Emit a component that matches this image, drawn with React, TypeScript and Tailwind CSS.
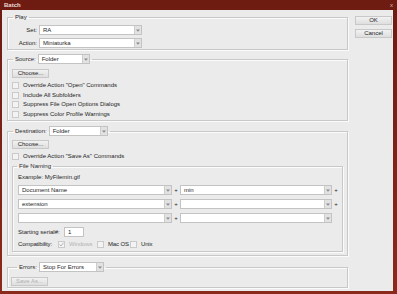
import React from "react";

const font = "font-['Liberation_Sans',Arial,sans-serif]";

function Arrow() {
  return (
    <div className="w-[7px] h-full bg-[#e2e2e2] border-l border-[#cdcdcd] flex items-center justify-center">
      <svg width="4" height="3" viewBox="0 0 4 3">
        <path d="M0 0.5 H4 L2 2.7 Z" fill="#8a8a8a" />
      </svg>
    </div>
  );
}

function Select({ value, w }: { value: string; w: string }) {
  return (
    <div className={`${w} h-[10px] flex items-stretch border border-[#c3c3c3] bg-white`}>
      <div className="flex-1 pl-[3px] leading-[8px] text-[6px] text-[#1e1e1e] truncate">{value}</div>
      <Arrow />
    </div>
  );
}

function Check({ label, checked, disabled }: { label: string; checked?: boolean; disabled?: boolean }) {
  return (
    <div className="flex items-center gap-[4px] whitespace-nowrap">
      <div className="w-[7px] h-[7px] shrink-0 border border-[#cacaca] bg-[#f3f3f3] flex items-center justify-center">
        {checked && (
          <svg width="5" height="5" viewBox="0 0 5 5">
            <path d="M0.5 2.5 L2 4 L4.5 0.8" stroke="#b5b5b5" strokeWidth="1" fill="none" />
          </svg>
        )}
      </div>
      <span className={disabled ? "text-[#b3b3b3]" : "text-[#1e1e1e]"}>{label}</span>
    </div>
  );
}

function Button({ label, w, disabled }: { label: string; w: string; disabled?: boolean }) {
  return (
    <div
      className={`${w} h-[9px] flex items-center justify-center border border-[#c8c8c8] bg-gradient-to-b from-[#f2f2f2] to-[#dedede] leading-[7px] whitespace-nowrap ${
        disabled ? "text-[#b0b0b0]" : "text-[#1e1e1e]"
      }`}
    >
      {label}
    </div>
  );
}

const box = "border border-[#c8c8c8] shadow-[1px_1px_0_#fbfbfb,inset_1px_1px_0_#fbfbfb]";

export default function App() {
  return (
    <div className={`${font} w-[397px] h-[294px] bg-gradient-to-b from-[#6e1b12] to-[#8a2a1d] flex flex-col text-[6px] text-[#1e1e1e] whitespace-nowrap`}>
      {/* title bar */}
      <div className="h-[10px] flex items-center justify-between pl-[4px] pr-[4px]">
        <span className="text-[6px] font-bold text-[#f0dcd8] leading-[8px]">Batch</span>
        <span className="text-[6px] text-[#d8bcb6] leading-[8px]">x</span>
      </div>

      <div className="flex-1 ml-[2px] mr-[4px] mb-[3px] bg-[#ebebeb] flex pl-[5px] pr-[1px]">
        {/* left column */}
        <div className="w-[341px] flex flex-col">
          {/* Play */}
          <fieldset className={`${box} mt-[3px] pb-[1px]`}>
            <legend className="ml-[5px] px-[2px] h-[8px] leading-[8px]">Play</legend>
            <div className="pt-[4px] flex flex-col gap-[3px]">
              <div className="flex items-center">
                <span className="w-[31px] text-right pr-[2px]">Set:</span>
                <Select value="RA" w="w-[103px]" />
              </div>
              <div className="flex items-center">
                <span className="w-[31px] text-right pr-[2px]">Action:</span>
                <Select value="Miniaturka" w="w-[103px]" />
              </div>
            </div>
          </fieldset>

          {/* Source */}
          <fieldset className={`${box} mt-[4px] pb-[1px]`}>
            <legend className="ml-[5px] px-[2px] h-[10px] flex items-center gap-[2px]">
              <span>Source:</span>
              <Select value="Folder" w="w-[52px]" />
            </legend>
            <div className="pt-[5px] pl-[4px] flex flex-col">
              <Button label="Choose..." w="w-[37px]" />
              <div className="mt-[3px] flex flex-col">
                <div className="h-[9.5px] flex items-center"><Check label={'Override Action "Open" Commands'} /></div>
                <div className="h-[9.5px] flex items-center"><Check label="Include All Subfolders" /></div>
                <div className="h-[9.5px] flex items-center"><Check label="Suppress File Open Options Dialogs" /></div>
                <div className="h-[9.5px] flex items-center"><Check label="Suppress Color Profile Warnings" /></div>
              </div>
            </div>
          </fieldset>

          {/* Destination */}
          <fieldset className={`${box} mt-[5px] pb-[3px]`}>
            <legend className="ml-[5px] px-[2px] h-[10px] flex items-center gap-[2px]">
              <span>Destination:</span>
              <Select value="Folder" w="w-[59px]" />
            </legend>
            <div className="pt-[4px] pl-[4px] pr-[4px] flex flex-col">
              <Button label="Choose..." w="w-[37px]" />
              <div className="mt-[3px] h-[9px] flex items-center">
                <Check label={'Override Action "Save As" Commands'} />
              </div>

              {/* File Naming */}
              <fieldset className={`${box} mt-[1px] pb-[3px]`}>
                <legend className="ml-[4px] px-[2px] h-[8px] leading-[8px]">File Naming</legend>
                <div className="pl-[5px] flex flex-col">
                  <div className="mt-[3px] h-[8px] leading-[8px]">Example: MyFilemin.gif</div>
                  <div className="mt-[4px] flex flex-col gap-[4px]">
                    <div className="flex items-center">
                      <Select value="Document Name" w="w-[154px]" />
                      <span className="w-[8px] text-center">+</span>
                      <Select value="min" w="w-[152px]" />
                      <span className="w-[8px] text-center">+</span>
                    </div>
                    <div className="flex items-center">
                      <Select value="extension" w="w-[154px]" />
                      <span className="w-[8px] text-center">+</span>
                      <Select value="" w="w-[152px]" />
                      <span className="w-[8px] text-center">+</span>
                    </div>
                    <div className="flex items-center">
                      <Select value="" w="w-[154px]" />
                      <span className="w-[8px] text-center">+</span>
                      <Select value="" w="w-[152px]" />
                    </div>
                  </div>
                  <div className="mt-[4px] flex items-center">
                    <span className="w-[46px]">Starting serial#:</span>
                    <div className="w-[20px] h-[10px] border border-[#c3c3c3] bg-white pl-[3px] leading-[8px]">1</div>
                  </div>
                  <div className="mt-[3px] h-[8px] flex items-center tracking-[-0.15px]">
                    <span className="w-[40px] shrink-0">Compatibility:</span>
                    <div className="w-[39px] shrink-0"><Check label="Windows" checked disabled /></div>
                    <div className="w-[33px] shrink-0"><Check label="Mac OS" /></div>
                    <Check label="Unix" />
                  </div>
                </div>
              </fieldset>
            </div>
          </fieldset>

          {/* Errors */}
          <fieldset className={`${box} mt-[6px] pb-[1px]`}>
            <legend className="ml-[9px] px-[2px] h-[10px] flex items-center gap-[2px]">
              <span>Errors:</span>
              <Select value="Stop For Errors" w="w-[65px]" />
            </legend>
            <div className="pt-[5px] pl-[3px]">
              <Button label="Save As..." w="w-[37px]" disabled />
            </div>
          </fieldset>
        </div>

        {/* right column */}
        <div className="ml-[7px] pt-[6px] flex flex-col gap-[4px]">
          <Button label="OK" w="w-[37px]" />
          <Button label="Cancel" w="w-[37px]" />
        </div>
      </div>
    </div>
  );
}
